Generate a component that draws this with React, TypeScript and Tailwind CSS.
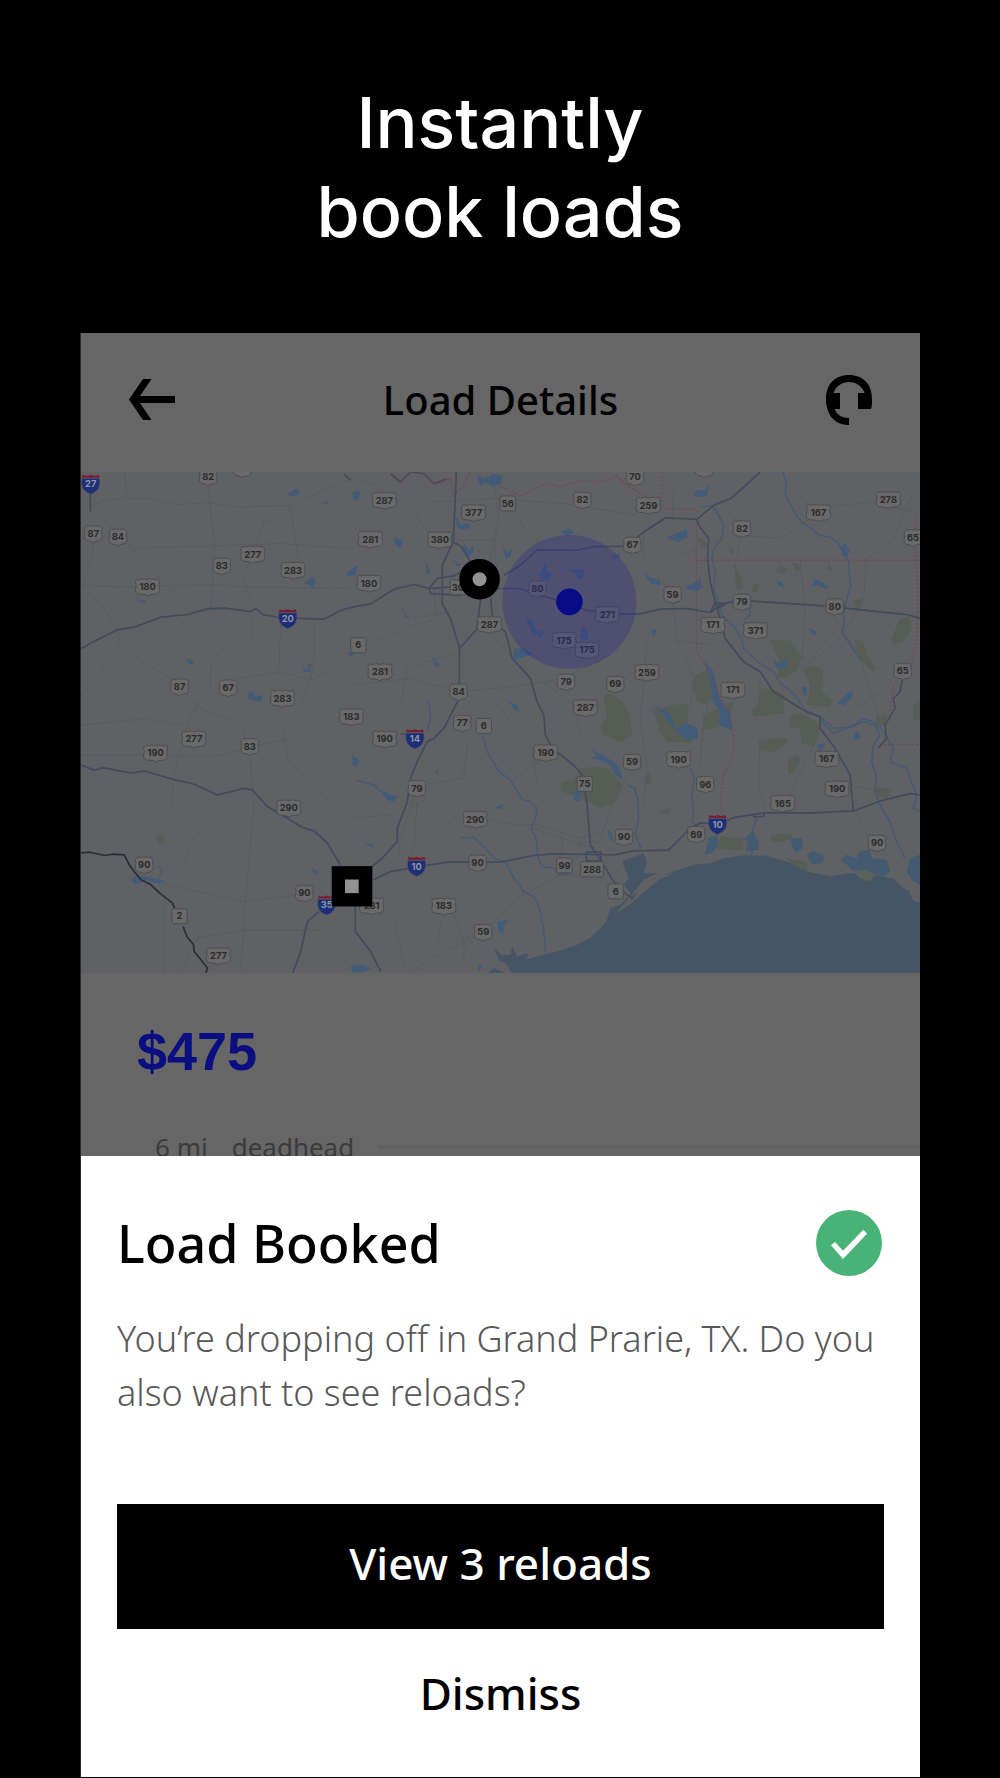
type Badge = [number, number, string];

const usShields: Badge[] = [
    [382, 14, '82'], [485, -10, ''], [37, 185, '87'], [111, 195, '84'], [516, 247, '277'], [423, 282, '83'],
    [637, 295, '283'], [200, 345, '180'], [296, 645, '87'], [442, 648, '67'], [605, 680, '283'], [812, 735, '183'],
    [911, 85, '287'], [1179, 122, '377'], [1506, 84, '82'], [869, 202, '281'], [1078, 204, '380'], [865, 334, '180'],
    [1371, 350, '80'], [1227, 458, '287'], [1581, 428, '271'], [1451, 506, '175'], [1520, 535, '175'], [898, 600, '281'],
    [1134, 660, '84'], [1457, 630, '79'], [1605, 637, '69'], [1515, 708, '287'], [1145, 754, '77'],
    [1664, 15, '70'], [1872, -10, ''], [1704, 100, '259'], [1656, 219, '67'], [1985, 170, '82'], [2215, 122, '167'],
    [2425, 83, '278'], [2499, 197, '65'], [1777, 368, '59'], [1985, 390, '79'], [2264, 404, '80'], [1898, 460, '171'],
    [2026, 476, '371'], [1700, 602, '259'], [1958, 655, '171'], [2468, 598, '65'],
    [224, 844, '190'], [339, 802, '277'], [507, 824, '83'], [624, 1009, '290'], [190, 1180, '90'], [671, 1265, '90'],
    [413, 1453, '277'], [912, 802, '190'], [1009, 950, '79'], [1184, 1043, '290'], [1191, 1174, '90'], [873, 1303, '281'],
    [1090, 1304, '183'], [1208, 1382, '59'], [1396, 843, '190'], [1655, 871, '59'], [1631, 1096, '90'],
    [1795, 863, '190'], [1875, 938, '96'], [2108, 995, '165'], [1848, 1088, '69'], [2240, 862, '167'], [2271, 952, '190'],
    [2391, 1114, '90'],
];

const stateSigns: Badge[] = [
    [1282, 94, '56'], [1132, 346, '30'], [833, 520, '6'], [1210, 762, '6'], [296, 1334, '2'],
    [1513, 937, '75'], [1452, 1181, '99'], [1535, 1193, '288'], [1606, 1259, '6'],
];

const interstates: Badge[] = [
    [29, 36, '27'], [621, 440, '20'], [738, 1300, '35'], [1003, 801, '14'], [1008, 1184, '10'], [1912, 1058, '10'],
];

const BadgeText = ({ label, fill }: { label: string; fill: string }) => (
    <text y="10" textAnchor="middle" fontSize="28" fontWeight="700" fill={fill}>{label}</text>
);

const UsShield = ({ badge: [x, y, label] }: { badge: Badge }) => (
    <g transform={`translate(${x} ${y})`}>
        <path
            d={label.length === 3
                ? 'M-31 -24Q-25 -20 -18 -23Q-9 -26 0 -22Q9 -26 18 -23Q25 -20 31 -24L37 -15Q32 -7 35 1Q39 10 34 17Q29 23 18 22Q7 22 0 27Q-7 22 -18 22Q-29 23 -34 17Q-39 10 -35 1Q-32 -7 -37 -15Z'
                : 'M-20 -24Q-15 -20 -10 -23Q-5 -26 0 -22Q5 -26 10 -23Q15 -20 20 -24L27 -15Q23 -7 26 1Q29 10 24 17Q20 22 12 22Q5 23 0 27Q-5 23 -12 22Q-20 22 -24 17Q-29 10 -26 1Q-23 -7 -27 -15Z'}
            fill="#696969"
            stroke="#4c4d4f"
            strokeWidth="3"
        />
        <BadgeText label={label} fill="#2c2c2c" />
    </g>
);

const StateSign = ({ badge: [x, y, label] }: { badge: Badge }) => {
    const half = label.length === 3 ? 34 : 23;
    return (
        <g transform={`translate(${x} ${y})`}>
            <rect x={-half} y="-22" width={half * 2} height="45" rx="5" fill="#696969" stroke="#4c4d4f" strokeWidth="3" />
            <BadgeText label={label} fill="#2c2c2c" />
        </g>
    );
};

const Interstate = ({ badge: [x, y, label] }: { badge: Badge }) => (
    <g transform={`translate(${x} ${y})`}>
        <path d="M-27 -17H27Q30 0 24 13Q17 25 0 31Q-17 25 -24 13Q-30 0 -27 -17Z" fill="#1f2f77" stroke="#56596a" strokeWidth="2" />
        <path d="M-24 -28Q-12 -22 0 -28Q12 -22 24 -28L27 -19H-27Z" fill="#7c1d30" />
        <BadgeText label={label} fill="#8e92a5" />
    </g>
);

const MinorRoads = () => (
    <g fill="none" stroke="#585b60" strokeWidth="3">
        <path d="M0 115L60 88L130 78L220 80L280 98L382 92L470 105L630 100L720 60L810 20M382 30L390 130L402 215L395 340L390 410M60 130L150 232L220 300L322 412M0 345L60 395L110 475L115 515L180 565L300 640L348 705M0 340L120 345L400 338L500 345L810 350M630 105L600 130L550 150L520 240L485 320L515 400M630 105L650 250L655 300M0 200L100 190L160 228L400 222L600 215L810 230M130 0L138 75M40 200L30 270L5 340" />
        <path d="M515 430L515 500L600 595M515 440L440 510L390 580L388 650L350 700L320 760L280 900L270 1020M115 515L60 600L0 670M348 705L480 760L507 850L520 1000L498 1230L490 1330L480 1500M350 700L300 760L200 740L0 760M470 620L600 600L690 625L810 560M690 625L660 700L605 760L620 860L700 950L810 1030M0 850L220 850L400 855L620 800M210 1230L350 1260L490 1290L660 1270M300 1500L350 1400L500 1375L720 1375M600 440L595 590M700 450L700 560L690 620M250 1260L248 1500M450 1010L340 1100L310 1180" />
        <path d="M820 10L900 50L990 110L1050 190M1050 90L1240 80L1450 95L1670 130M1240 30L1255 140L1225 280M1290 100L1340 180L1400 240M1130 205H1240L1250 330M1190 240L1250 215M1060 350L1065 440L890 500L810 550M1110 420L1000 440M1134 540L980 590L960 700M1134 660L990 620L810 640M1134 660L1300 645L1450 620L1610 540M1220 480L1300 560L1480 700L1500 790M1250 700L1350 820L1370 930M1400 850L1290 930M1050 800L1130 880L1170 930M1020 940L1150 920L1160 820" />
        <path d="M1000 980L960 1100L950 1170M1010 990L1000 1120L970 1200M1040 980L990 1010M1200 1040L1300 1060L1370 1060L1500 1100L1570 1080M1350 1070L1540 1130M1444 1080L1446 1160M1500 1110H1560L1590 1010L1640 910M1500 1110L1490 1160M1530 1210L1440 1210L1310 1280L1208 1382L1140 1420L1050 1460L990 1506M1090 1310L1070 1420M870 1290L940 1340L970 1480M1020 1200L1100 1280L1150 1410V1480M1140 1410L1160 1395L1175 1412L1155 1430ZM820 1040L930 1030" />
        <path d="M1690 160V260L1777 370L1790 500L1840 620M1780 60L1775 150M1900 60L1985 170L1970 260M2110 30L2200 110L2370 90L2500 120M2160 270L2175 400L2165 600L2260 480M2165 600L2280 500L2350 390L2360 260L2440 200L2500 60M1700 510L1680 750L1700 890L1690 1000M1780 505L1900 520M1830 730L1840 600M2220 120L2100 200L1985 190M1930 200L1800 250M1860 880L1870 740L1900 650M2040 800L2035 950L2060 1010M2130 970L2210 800L2230 740M2300 720L2410 660L2500 540M2330 1020L2370 1110L2460 1180M2150 520L2040 620L2030 750M2260 430L2340 560L2400 750M1700 720L1780 700M2270 930L2400 960L2500 1000" />
    </g>
);

const Greens = () => (
    <g fill="#555d55">
        <path d="M2070 506H2130L2145 530L2165 555L2150 595L2120 615L2090 620L2100 570ZM2170 590L2200 582L2228 595L2230 640L2225 660L2255 685L2250 705L2180 700L2190 640ZM2040 650L2075 652L2115 670L2108 725L2020 735L2010 720L2035 700ZM2130 730L2165 728L2220 755L2210 800L2200 825L2165 815L2160 770L2130 765ZM1845 610L1880 595L1900 620L1905 680L1880 700L1850 690L1838 650ZM1720 720L1800 695L1825 700L1820 780L1840 790L1830 815L1760 810L1740 780ZM1870 730L1960 690L1950 740L1920 765L1870 775Z" />
        <path d="M1570 670L1590 665L1625 690L1650 730L1655 790L1620 810L1570 790L1560 760L1580 740ZM1500 890L1550 885L1590 895L1625 940L1610 990L1560 1010L1520 990L1470 968L1438 958L1445 930L1480 925ZM2035 805L2120 800L2122 812L2080 840L2038 838ZM2125 860L2155 850L2160 870L2140 905L2125 910ZM1920 1095L1990 1100L1988 1135L1915 1132ZM2120 1160L2180 1170L2183 1200L2150 1192Z" />
        <path d="M2085 300L2100 280L2120 290L2115 305ZM2135 275L2150 272L2160 290L2150 300ZM2235 290L2250 280L2255 298ZM1960 270L1980 310L1990 350L1970 355ZM2020 335L2040 340L2030 362H2015ZM2460 440L2490 435L2495 470L2470 510L2440 520L2435 500ZM2325 500L2350 510L2360 550L2390 590L2380 600L2350 570L2330 550ZM2320 385L2345 380L2335 420ZM1850 195L1875 210L1880 235L1860 220ZM1945 225L1960 230L1955 255ZM2390 735L2420 730L2415 760L2380 770ZM2070 1095L2100 1085L2140 1095L2110 1112L2075 1108ZM2385 945L2430 955L2420 985L2390 970ZM225 1095L240 1088L252 1105L235 1122ZM1695 910L1710 900L1712 935L1692 940ZM1735 1020L1775 1005L1765 1030ZM1060 900L1075 892L1070 912ZM1095 1060L1110 1050L1105 1062ZM2500 700L2520 690V745H2500Z" />
    </g>
);

const Water = () => (
    <g fill="#415b79">
        <path
            d="M1220 1506L1240 1490L1275 1506H2520V1290L2500 1280L2490 1260L2470 1250L2440 1222L2410 1215L2350 1205L2300 1205L2250 1214L2180 1200L2120 1170L2060 1153L1990 1151L1930 1160L1890 1175L1840 1180L1780 1200L1720 1220L1690 1250L1660 1270L1640 1300L1600 1330L1560 1370L1530 1400L1490 1420L1430 1440L1380 1452L1340 1465L1342 1445L1310 1455L1295 1425L1290 1450L1265 1452L1240 1430L1255 1465L1275 1475L1295 1506Z"
            fill="#455566"
        />
        <path d="M1575 1360L1590 1310L1620 1300L1650 1265L1630 1240L1645 1220L1625 1170L1650 1160L1690 1145L1700 1170L1690 1205L1730 1205L1690 1225L1670 1250L1650 1275L1610 1320Z" fill="#455566" />
        <path d="M1780 1207L1735 1212L1700 1235L1672 1262L1655 1284L1600 1330L1650 1298L1690 1262L1735 1225ZM2488 1262L2500 1252L2520 1268V1292L2500 1288Z" fill="#606163" />
        <path d="M2280 1165L2300 1150L2330 1160L2340 1140L2370 1135L2375 1160L2420 1165L2430 1200L2410 1215L2350 1195L2320 1200L2300 1180ZM2180 1150L2200 1140L2235 1155L2225 1175L2195 1178ZM2130 1100L2165 1100L2170 1130L2145 1142L2135 1120ZM1995 1100L2015 1080L2035 1110L2035 1135L1995 1140L2005 1110L1978 1098ZM1885 1100L1910 1090L1915 1120L1895 1145L1873 1150ZM2480 1200L2490 1160L2520 1150V1240L2495 1225Z" fill="#435a70" />
        <path d="M2325 1205L2350 1195L2385 1210L2370 1230L2340 1220Z" fill="#56625a" />
        <path d="M1870 570L1895 590L1905 620L1915 670L1930 700L1950 720L1955 775L1915 760L1920 720L1900 690L1890 640L1885 610ZM1712 695L1735 710L1770 725L1785 770L1820 755L1850 770L1855 800L1825 805L1800 790L1780 770L1750 730ZM1890 30L1875 55L1850 55L1838 65L1850 75L1878 72ZM1760 195L1790 185L1820 170L1822 195L1795 210L1762 200ZM1690 300L1705 315L1740 325L1738 340L1710 335ZM1815 345L1850 330L1860 315L1862 340L1870 345L1850 360L1825 352Z" />
        <path d="M1188 10L1215 20L1235 5L1265 10L1262 35L1235 45L1215 30L1200 40ZM1125 130L1140 160L1165 155L1168 168L1145 172L1130 165ZM1150 215L1165 235L1180 220L1178 240L1165 255L1145 240ZM1265 220L1280 245L1295 225L1290 255L1275 260ZM1365 295L1380 305L1395 270L1400 300L1415 305L1405 325L1385 320ZM1445 280L1475 295L1510 290L1512 310L1500 325L1485 305ZM1337 435L1355 450L1370 480L1392 478L1380 500L1350 475ZM1505 460L1520 480L1525 505L1500 500ZM1300 530L1330 530L1360 548L1330 555L1300 568ZM1440 180L1465 170L1480 180L1460 192ZM1590 255L1620 240L1615 260ZM940 195L965 205L960 230L942 215ZM815 60L840 58L835 80L820 85ZM800 300L830 280L825 310L800 315Z" />
        <path d="M2075 560L2095 575L2120 560L2118 590L2095 595ZM2270 695L2310 660L2320 668L2295 700ZM2090 325L2110 338L2115 348L2095 342ZM2205 320L2225 330L2245 345L2240 352L2215 340L2195 345ZM2185 470L2210 480L2208 490L2195 488ZM2280 225L2295 215L2308 235L2300 258L2288 250ZM2165 645H2180L2178 672L2168 665ZM1712 475L1730 470L1722 495ZM1525 820L1545 840L1570 850L1610 880L1625 910L1625 925L1605 910L1590 880L1560 865L1530 860L1550 852ZM1485 950L1500 960L1498 990L1480 985ZM1580 1075L1595 1085L1598 1108L1588 1105ZM2320 785L2335 782L2340 800L2322 805ZM2210 820L2235 815L2230 830L2215 838Z" />
        <path d="M620 65L645 50L658 58L650 70L630 72ZM720 92L745 86L742 98ZM670 335L695 315L705 330L695 350L685 338ZM165 375L175 385H195L192 394L172 388ZM318 562L338 565L340 578L325 578ZM665 590L685 595L680 575L692 575L690 600L670 600ZM500 665L515 660L520 675L545 670L540 690L505 682ZM800 545L820 540L815 555ZM150 1225L170 1210L185 1215L215 1220L250 1228L235 1235L200 1228L165 1238ZM690 1190L712 1200L705 1212ZM815 850L835 865L830 885L815 880ZM900 955L935 970L950 975L940 990L920 985ZM1238 1010L1270 998L1265 1012ZM850 1115L880 1120L875 1128ZM1250 1350L1285 1345L1270 1360L1268 1385L1255 1380ZM1190 1480L1205 1485L1195 1500ZM810 1485L840 1480L870 1492L850 1502H815ZM1050 545L1065 570L1078 580L1065 585ZM960 400L975 430L990 438L975 440ZM1285 690L1310 700L1318 722L1300 710ZM1035 270L1050 300L1038 308ZM1115 265L1145 280L1130 282Z" />
    </g>
);

const Rivers = () => (
    <g fill="none" stroke="#425a76" strokeWidth="4" strokeLinejoin="round">
        <path d="M2108 0L2118 30L2115 65L2130 95L2145 125L2165 150L2200 175L2215 190L2250 195L2275 215L2290 245L2305 265L2308 310L2312 340L2300 380L2290 420L2292 460L2285 480L2305 510L2325 540L2345 565" />
        <path d="M1860 105L1895 100L1910 120L1930 160L1925 200L1900 230L1895 260L1905 300L1900 350L1915 390L1925 430L1960 465L1985 500L1990 530L2040 575L2080 600L2100 635L2140 665L2165 700L2180 725L2220 735L2260 770L2320 765L2345 740L2380 750L2400 790L2380 820L2375 870L2388 910L2385 960L2400 1000L2430 1050L2445 1100L2475 1160M2010 395L2008 430L1990 450" />
        <path d="M2220 744L2260 785L2310 765L2350 750L2400 765L2440 830L2430 870L2480 890L2490 920L2510 970L2500 1010L2520 1020M1830 890L1842 920L1835 970L1840 1020L1835 1050L1850 1066M1660 945L1672 980L1675 1040L1665 1090L1682 1130M1640 940L1665 950" />
        <path d="M1205 790L1220 840L1255 900L1290 925L1325 985L1350 990L1370 1010L1365 1040L1352 1070L1370 1110V1150L1385 1185L1420 1190L1435 1210L1460 1208M1140 1098H1180L1215 1130L1240 1160L1275 1170L1300 1220L1330 1260L1365 1280L1380 1320L1390 1380L1395 1440" />
        <path d="M825 925L860 935L880 940L900 960M1045 690L1050 740L1040 780M2030 1040L2018 1070L2020 1090M2020 1130L2010 1156M230 1180L245 1200L232 1225" />
    </g>
);

const Highways = () => (
    <g fill="none" stroke="#454b5e" strokeWidth="5" strokeLinejoin="round">
        <path d="M0 531L40 508L110 474L160 466L240 436L320 428L380 411L430 409L510 419L525 410L545 428L600 438L730 442L780 416L815 406L870 396L940 352L1000 338L1045 350L1120 345L1260 350L1320 350L1370 368L1450 390L1520 416L1600 426L1680 426L1740 412L1820 410L1890 422L1920 398L1980 385L2050 390L2200 400L2290 408L2400 420L2480 428L2520 440" />
        <path d="M1127 0L1125 60L1118 210L1085 280V396L1110 440L1137 530L1136 680L1090 770L1060 800L1040 810L1010 870L990 920L980 990L950 1070L950 1110L900 1165L870 1188" />
        <path d="M1118 210L1140 222L1170 270M1200 380L1190 470L1137 530M1200 380L1230 370L1237 450L1275 480L1295 560L1350 620L1370 690L1390 730L1395 790L1415 830L1480 880L1505 910L1520 1000L1530 1120L1560 1165L1600 1230L1640 1270L1660 1280" />
        <path d="M1270 310L1320 280L1370 234L1490 235L1540 224L1640 223L1690 180L1755 138L1850 142L1900 100L1955 78L2040 0M1850 142L1855 160L1885 200L1882 260L1890 330L1905 390L1920 440L1935 500L1990 570L2040 600L2080 660L2170 715L2220 735V770L2265 830L2310 910L2320 1020M790 6L810 25" />
        <path d="M875 1226L930 1200L1000 1188L1100 1172L1260 1172L1360 1152L1420 1147L1600 1150L1660 1138L1765 1136L1830 1070L1860 1054L1920 1058L1960 1038L2050 1024L2200 1024L2320 1018L2400 988L2490 966L2520 970M1045 350L1070 320L1120 312L1140 300M1045 350L1050 365L1140 370L1165 335M1518 1142H1562V1168H1518ZM2020 1028L2050 1024L2052 1034L2022 1036ZM1890 422L1905 392L1940 395L1910 410" />
        <path d="M0 880L40 896L65 888L150 904L190 898L280 924L340 938L410 970L490 950L515 955L560 1005L620 1040L665 1068L700 1078L740 1115L780 1182M716 1320L680 1350L660 1440L636 1506M824 1304V1380L870 1440L900 1500M2468 620L2460 660L2440 680L2445 710L2415 760L2420 800L2395 830M28 66V122M960 787H1000" />
        <path d="M0 1144L28 1142L70 1152L95 1148L130 1150L145 1180L160 1200L180 1225L210 1240L240 1268L275 1295L285 1320M307 1365L318 1395L338 1420L340 1440L360 1465L380 1490L375 1506" stroke="#2c2d34" />
        <path d="M930 6L960 30L990 0L1030 5L1060 35L1100 20" stroke="#55475a" />
    </g>
);

const Borders = () => (
    <g fill="none" stroke="#75484c" strokeWidth="4" strokeDasharray="6 6">
        <path d="M1080 35L1110 20L1120 70L1150 40L1170 0M1260 45L1300 60L1320 75L1360 50L1400 35L1440 45L1500 25L1560 30L1610 12L1640 40L1690 70L1730 95L1760 110L1848 112V540L1870 570L1910 650L1950 740L1962 800L1960 850L1930 910L1920 980L1930 1040M1746 0V95M1848 265H2520M2510 130L2505 220L2515 380L2510 500L2490 600M2440 640L2430 720M2400 819H2520" />
    </g>
);

const RouteMap = () => (
    <svg viewBox="0 0 2520 1506" className="block h-auto w-full bg-[#5f6164] font-['Inter','Liberation_Sans',sans-serif]" role="img" aria-label="Route map">
        <Greens />
        <MinorRoads />
        <Water />
        <Rivers />
        <Borders />
        <Highways />
        {stateSigns.map((badge, index) => <StateSign key={index} badge={badge} />)}
        {usShields.map((badge, index) => <UsShield key={index} badge={badge} />)}
        {interstates.map((badge, index) => <Interstate key={index} badge={badge} />)}
        <circle cx="1467" cy="390" r="201" fill="#2d2a90" fillOpacity=".32" />
        <circle cx="1467" cy="390" r="40" fill="#070c86" />
        <circle cx="1197" cy="322" r="41" fill="#929292" stroke="#000" strokeWidth="40" />
        <rect x="753" y="1184" width="122" height="121" fill="#000" />
        <rect x="793" y="1224" width="41" height="41" fill="#929292" />
    </svg>
);

const Header = () => (
    <header className="flex h-[139px] items-center justify-between px-12 pb-1.5">
        <button type="button" aria-label="Back">
            <svg viewBox="0 0 46 41" className="h-[41px] w-[46px]">
                <path d="M14 0H22.5L11 17H46V24H11L22.5 41H14L0 20.5Z" />
            </svg>
        </button>
        <h2 className="text-[40px] font-medium">Load Details</h2>
        <button type="button" aria-label="Support">
            <svg viewBox="0 0 46 50" className="h-[50px] w-[46px]">
                <path d="M0 24C0 9 9 0 23 0S46 9 46 24C46 28 46 31 45 34H32V18H38.5C36 11 30.500 7 23 7S10 11 7.500 18H14V34H8.500C11 40 16 43 23 43V50C9 50 0 40 0 24Z" />
            </svg>
        </button>
    </header>
);

const LoadSummary = () => (
    <section className="h-[183px] overflow-hidden pt-[46px]">
        <p className="pl-14 font-['Liberation_Sans','Noto_Sans',sans-serif] text-[54px] leading-[64px] font-bold text-[#0a0e80]">$475</p>
        <div className="mt-[46px] flex items-center gap-6 pl-[74px] text-[26px] leading-9 text-[#3b3b3b]">
            <span className="whitespace-nowrap">6 mi</span>
            <span>deadhead</span>
            <span className="h-1 flex-1 bg-[#606060]" />
        </div>
    </section>
);

const BookedSheet = () => (
    <section className="bg-white px-9 pt-[54px] pb-5">
        <div className="flex items-start justify-between">
            <h2 className="text-[52px] leading-[66px] font-medium">Load Booked</h2>
            <svg viewBox="0 0 198 198" className="mr-0.5 size-[66px]" role="img" aria-label="Booked">
                <circle cx="99" cy="99" r="99" fill="#49b277" />
                <path d="M45 106L57 96L81 122L142 59L153 71L81 147Z" fill="#fff" />
            </svg>
        </div>
        <p className="mt-9 text-[36px] leading-[54px] font-light text-[#585858]">
            You’re dropping off in Grand Prarie, TX. Do you also want to see reloads?
        </p>
        <button type="button" className="mt-[84px] flex h-[125px] w-full items-center justify-center bg-black pb-2 text-[44px] font-medium text-white">
            View 3 reloads
        </button>
        <button type="button" className="flex h-32 w-full items-center justify-center text-[44px] font-medium">
            Dismiss
        </button>
    </section>
);

const App = () => (
    <main className="min-h-screen bg-black pt-[78px] pb-px">
        <h1 className="text-center font-['Inter','Liberation_Sans',sans-serif] text-[70px] leading-[89px] font-medium text-white">
            Instantly<br />book loads
        </h1>
        <div className="mx-auto mt-[77px] w-[84%] border-l border-[#2b2b2b] bg-[#666666] font-['Noto_Sans','Open_Sans',sans-serif] text-black">
            <Header />
            <RouteMap />
            <LoadSummary />
            <BookedSheet />
        </div>
    </main>
);

export default App;
